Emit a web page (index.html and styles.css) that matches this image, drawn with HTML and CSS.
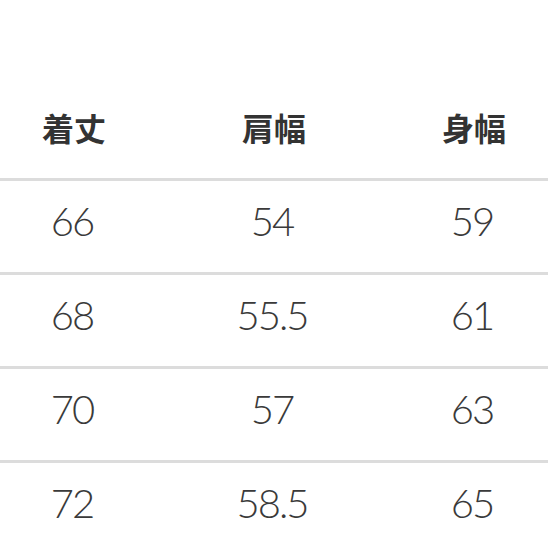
FILE: index.html
```html
<!DOCTYPE html>
<html lang="ja">
<head>
<meta charset="utf-8">
<link rel="stylesheet" href="styles.css">
</head>
<body>
<div class="table">
  <div class="row head">
    <div class="cell">着丈</div>
    <div class="cell">肩幅</div>
    <div class="cell">身幅</div>
  </div>
  <div class="row">
    <div class="cell">66</div>
    <div class="cell">54</div>
    <div class="cell">59</div>
  </div>
  <div class="row">
    <div class="cell">68</div>
    <div class="cell">55.5</div>
    <div class="cell">61</div>
  </div>
  <div class="row">
    <div class="cell">70</div>
    <div class="cell">57</div>
    <div class="cell">63</div>
  </div>
  <div class="row">
    <div class="cell">72</div>
    <div class="cell">58.5</div>
    <div class="cell">65</div>
  </div>
</div>
</body>
</html>
```
FILE: styles.css
```css
html, body {
  margin: 0;
  padding: 0;
  background: #ffffff;
  overflow: hidden;
}
.table {
  width: 600px;
  margin-left: -26px;
}
.row {
  display: grid;
  grid-template-columns: repeat(3, 200px);
  height: 91px;
  border-top: 3px solid #dcdcdc;
  align-items: center;
  font-family: Lato, "Noto Sans", sans-serif;
  font-weight: 300;
  font-size: 40px;
  letter-spacing: -2px;
  color: #3a3a3a;
  line-height: 1;
}
.row .cell {
  text-align: center;
  padding-right: 4px;
  padding-bottom: 12px;
}
.head {
  height: 178px;
  border-top: none;
  align-items: start;
  font-family: "Noto Sans CJK JP", sans-serif;
  font-weight: 700;
  font-size: 32px;
  letter-spacing: 0;
  color: #333333;
}
.head .cell {
  padding-top: 111px;
  padding-right: 0;
  padding-bottom: 0;
}
```
